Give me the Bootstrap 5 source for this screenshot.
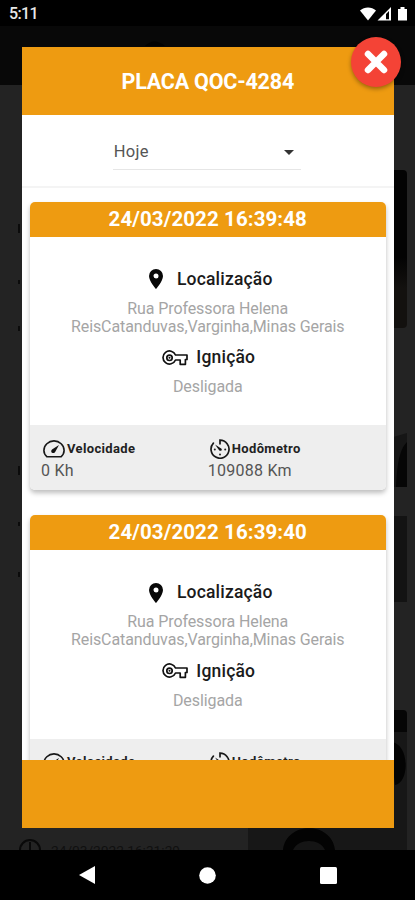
<!DOCTYPE html>
<html lang="pt-BR">
<head>
<meta charset="utf-8">
<meta name="viewport" content="width=device-width, initial-scale=1">
<title>Placa QOC-4284</title>
<link href="https://cdn.jsdelivr.net/npm/bootstrap@5.3.0/dist/css/bootstrap.min.css" rel="stylesheet">
<style>
body{font-family:Roboto,sans-serif;background:#000;color:#222}
svg{display:block;flex:none}
.phone{width:415px;height:900px}
.status-bar{height:26px;padding:2px 7px 0 9px;font-size:16px;font-weight:500;letter-spacing:-.6px;color:#e8e8e8}
.screen{height:824px;padding:20.5px 21px 22px 21.5px;background:#232323}
.backdrop-art{inset:0}
.panel{height:781.5px;background:#fff}
.bar{background:#ee9b11;height:68px}
.bar-title{color:#fff;font-size:21.5px;font-weight:700;letter-spacing:-.2px;padding-top:3px}
.close-btn{width:50px;height:50px;top:11px;left:351px;background:#f44336;box-shadow:0 2px 4px rgba(0,0,0,.35)}
.filter{height:73px;border-bottom:2px solid #f4f4f4}
.picker{width:188px;height:34px;margin:5px 2px 0 0;padding:0 7px 0 1px;border-bottom:1px solid #e6e6e6;font-size:16.5px;letter-spacing:.3px;color:#555}
.feed{padding:14px 8.5px 0 8.5px}
.record{height:288.5px;margin-bottom:25px;border-radius:5px;background:#fff;box-shadow:0 3px 5px rgba(0,0,0,.26)}
.record-date{height:35px;background:#ee9b11;color:#fff;font-size:20.5px;font-weight:700;letter-spacing:.1px}
.record-main{height:188.5px;padding-top:30px}
.label{height:25px;font-size:17.5px;font-weight:500;letter-spacing:.18px;color:#1b1b1b}
.pin-icon{margin:0 14px 0 6px}
.key-icon{margin:1px 8px 0 2px}
.value{font-size:16px;line-height:18.2px;letter-spacing:-.1px;color:#a5a5a5}
.location{margin:8px 0 9px}
.ignition{margin-top:8.500px}
.record-foot{height:65px;background:#eee;padding:12px 11px 0 11px}
.metric{height:23px;font-size:13px;font-weight:700;letter-spacing:.35px;color:#222}
.metric svg{margin:0 2px 0 2px}
.amount{font-size:16px;line-height:22px;letter-spacing:.25px;color:#555}
.nav-bar{height:50px;padding:0 78px}
</style>
</head>
<body class="overflow-hidden">
<svg width="0" height="0" class="position-absolute">
  <symbol id="pin" viewBox="0 0 14 20"><path fill="#080808" fill-rule="evenodd" d="M7 0a7 7 0 0 0-7 7c0 5.300 7 13 7 13s7-7.700 7-13a7 7 0 0 0-7-7zm0 4.500a2.500 2.500 0 1 1 0 5 2.500 2.500 0 0 1 0-5z"/></symbol>
  <symbol id="key" viewBox="0 0 26 16"><g fill="none" stroke="#111" stroke-width="1.700" stroke-linejoin="round"><path d="M13.500 5H25v4.500h-1.600v4.800h-5.200V10h-4.700A6.500 6.500 0 1 1 13.500 5z"/><circle cx="7.500" cy="7.800" r="2.700"/></g><circle cx="7.500" cy="7.800" r="1" fill="#111"/></symbol>
  <symbol id="gauge" viewBox="0 0 22 18"><path fill="none" stroke="#181818" stroke-width="1.600" stroke-linejoin="round" d="M4 16.800C2 15 .9 13 .9 10.500a10.100 9.600 0 0 1 20.200 0c0 2.500-1.100 4.500-3.100 6.300z"/><path fill="#111" d="m16 5-7 4.500c-2.200 2.500.8 4.800 3 2.700z"/></symbol>
  <symbol id="dial" viewBox="0 0 20 20"><path fill="none" stroke="#181818" stroke-width="1.700" stroke-linecap="round" d="M10 4.800V1.200a9 9 0 1 1-6.600 2.900"/><path fill="#111" d="m5 5.500 6.500 4.200c1 1.600-.8 2.800-2.200 1.700z"/><circle cx="4.800" cy="10.500" r="1" fill="#222"/><circle cx="15.200" cy="10.500" r="1" fill="#222"/><circle cx="10" cy="15.500" r="1" fill="#222"/></symbol>
</svg>
<div class="phone d-flex flex-column">
  <header class="status-bar d-flex align-items-center justify-content-between">
    <span>5:11</span>
    <svg width="48" height="16" viewBox="0 0 48 16" fill="#fff"><path d="M0 4.500C4.500.4 11.500.4 16 4.500L8 14.500z"/><path fill-rule="evenodd" d="M17.500 14.500 31 1v13.500zm8.500-1.300h3V5l-3 3z"/><path d="M38 3h2.500V1h4v2H47v11.500h-9z"/></svg>
  </header>
  <main class="screen position-relative">
    <svg class="backdrop-art position-absolute" width="415" height="824" viewBox="0 0 415 824">
      <path fill="#080808" d="M0 0h415v59H0z"/>
      <path fill="#020202" d="M145 20q9-9 20 0z"/>
      <linearGradient id="shade" x2="0" y2="1"><stop offset=".55" stop-color="#030303"/><stop offset=".75" stop-color="#13110f"/></linearGradient>
      <path fill="url(#shade)" d="M390 144h13q4 0 4 4v150q0 4-4 4h-13z"/>
      <path fill="#161616" d="M390 412l17-5v54h-17z"/><path fill="#060606" d="M396 461c1-25 4-38 11-45v45z"/>
      <path fill="#131313" d="M390 490h17v86h-17z"/>
      <path fill="#060606" d="M390 684h13q4 0 4 4v18h-17z"/>
      <path fill="#171717" d="M248 802h159V706h-15v96H248v22h159v-24z"/><path fill="#030303" d="M390 716c20 0 20 41 5 43zM283 824c3-29 49-29 52 0z"/><path fill="#151515" d="M293 824c5-12 27-12 32 0z"/>
      <path stroke="#0b0b0b" stroke-width="2" d="M19 198v9M19 254v4M19 300v5M19 440v9M19 496v4M19 546v5"/>
      <circle cx="30" cy="824" r="10" fill="none" stroke="#090909" stroke-width="2"/><path stroke="#090909" stroke-width="2" d="M30 816v8"/>
      <text x="51" y="829" font-size="13.700" fill="#101010">24/03/2022 16:31:29</text>
    </svg>
    <section class="panel position-relative d-flex flex-column">
      <div class="bar flex-shrink-0 d-flex align-items-center justify-content-center"><h1 class="bar-title m-0">PLACA QOC-4284</h1></div>
      <div class="filter flex-shrink-0 d-flex align-items-center justify-content-center">
        <div class="picker d-flex align-items-center justify-content-between"><span>Hoje</span><svg width="10" height="5" viewBox="0 0 10 5"><path fill="#333" d="M0 0h10L5 5z"/></svg></div>
      </div>
      <div class="feed flex-fill overflow-hidden">
        <article class="record overflow-hidden">
          <div class="record-date d-flex align-items-center justify-content-center">24/03/2022 16:39:48</div>
          <div class="record-main text-center">
            <div class="label d-flex align-items-center justify-content-center"><svg width="14" height="20" class="pin-icon"><use href="#pin"/></svg>Localização</div>
            <div class="value location">Rua Professora Helena<br>ReisCatanduvas,Varginha,Minas Gerais</div>
            <div class="label d-flex align-items-center justify-content-center"><svg width="26" height="16" class="key-icon"><use href="#key"/></svg>Ignição</div>
            <div class="value ignition">Desligada</div>
          </div>
          <div class="record-foot"><div class="row g-0">
            <div class="col-6"><div class="metric d-flex align-items-center"><svg width="22" height="18"><use href="#gauge"/></svg>Velocidade</div><div class="amount">0 Kh</div></div>
            <div class="col-6"><div class="metric d-flex align-items-center"><svg width="20" height="20"><use href="#dial"/></svg>Hodômetro</div><div class="amount">109088 Km</div></div>
          </div></div>
        </article>
        <article class="record overflow-hidden">
          <div class="record-date d-flex align-items-center justify-content-center">24/03/2022 16:39:40</div>
          <div class="record-main text-center">
            <div class="label d-flex align-items-center justify-content-center"><svg width="14" height="20" class="pin-icon"><use href="#pin"/></svg>Localização</div>
            <div class="value location">Rua Professora Helena<br>ReisCatanduvas,Varginha,Minas Gerais</div>
            <div class="label d-flex align-items-center justify-content-center"><svg width="26" height="16" class="key-icon"><use href="#key"/></svg>Ignição</div>
            <div class="value ignition">Desligada</div>
          </div>
          <div class="record-foot"><div class="row g-0">
            <div class="col-6"><div class="metric d-flex align-items-center"><svg width="22" height="18"><use href="#gauge"/></svg>Velocidade</div><div class="amount">0 Kh</div></div>
            <div class="col-6"><div class="metric d-flex align-items-center"><svg width="20" height="20"><use href="#dial"/></svg>Hodômetro</div><div class="amount">109088 Km</div></div>
          </div></div>
        </article>
      </div>
      <div class="bar flex-shrink-0"></div>
    </section>
    <button class="close-btn btn border-0 rounded-circle p-0 position-absolute d-flex align-items-center justify-content-center" aria-label="Fechar"><svg width="24" height="24" viewBox="0 0 24 24"><path stroke="#fff" stroke-width="6.500" stroke-linecap="round" d="m4 4 16 16M20 4 4 20"/></svg></button>
  </main>
  <footer class="nav-bar d-flex align-items-center justify-content-between">
    <svg width="17" height="18" viewBox="0 0 17 18"><path fill="#fff" d="M17 0v18L1 9z"/></svg>
    <svg width="17" height="17" viewBox="0 0 17 17"><circle cx="8.500" cy="8.500" r="8.300" fill="#fff"/></svg>
    <svg width="17" height="17" viewBox="0 0 17 17"><rect width="17" height="17" rx="1.500" fill="#fff"/></svg>
  </footer>
</div>
<script src="https://cdn.jsdelivr.net/npm/bootstrap@5.3.0/dist/js/bootstrap.bundle.min.js"></script>
</body>
</html>
